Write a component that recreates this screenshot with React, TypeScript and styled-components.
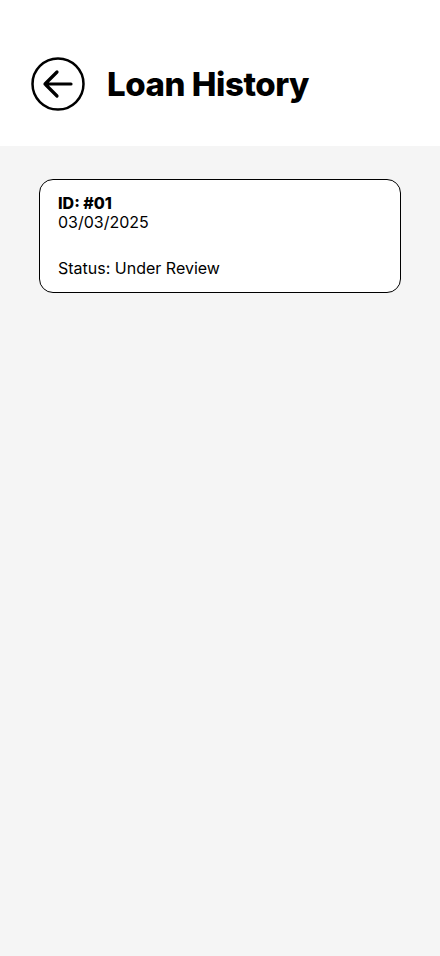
import styled, { createGlobalStyle } from "styled-components";

const GlobalStyle = createGlobalStyle`
  html, body {
    margin: 0;
    padding: 0;
    background: #f5f5f5;
    font-family: Inter, "Noto Sans", sans-serif;
    color: #000;
  }
`;

const BackArrow = () => (
  <svg width="54" height="54" viewBox="0 0 54 54" fill="none">
    <circle cx="27" cy="27" r="25.5" stroke="#000" strokeWidth="2.5" />
    <path
      d="M40 27H14M26 15L14 27L26 39"
      stroke="#000"
      strokeWidth="3.2"
      strokeLinecap="round"
      strokeLinejoin="round"
    />
  </svg>
);

const App = () => {
  return (
    <>
      <GlobalStyle />
      <Page>
        <Header>
          <BackButton aria-label="Back">
            <BackArrow />
          </BackButton>
          <Title>Loan History</Title>
        </Header>
        <List>
          <LoanCard>
            <LoanId>ID: #01</LoanId>
            <LoanDate>03/03/2025</LoanDate>
            <LoanStatus>Status: Under Review</LoanStatus>
          </LoanCard>
        </List>
      </Page>
    </>
  );
};

export default App;

const Page = styled.div`
  min-height: 956px;
  background: #f5f5f5;
`;

const Header = styled.header`
  display: flex;
  align-items: center;
  gap: 22px;
  height: 146px;
  padding: 22px 0 0 31px;
  box-sizing: border-box;
  background: #fff;
`;

const BackButton = styled.button`
  display: flex;
  padding: 0;
  border: none;
  background: none;
  cursor: pointer;
`;

const Title = styled.h1`
  margin: 0;
  font-size: 33px;
  font-weight: 800;
  letter-spacing: -0.45px;
`;

const List = styled.div`
  display: flex;
  flex-direction: column;
  gap: 16px;
  padding: 33px 39px;
`;

const LoanCard = styled.div`
  display: flex;
  flex-direction: column;
  height: 114px;
  box-sizing: border-box;
  padding: 13px 18px 14px;
  border: 1px solid #000;
  border-radius: 14px;
  background: #fff;
`;

const LoanId = styled.div`
  font-size: 16px;
  font-weight: 800;
  line-height: 20px;
`;

const LoanDate = styled.div`
  font-size: 16px;
  line-height: 18px;
`;

const LoanStatus = styled.div`
  margin-top: auto;
  font-size: 16px;
  line-height: 20px;
`;
